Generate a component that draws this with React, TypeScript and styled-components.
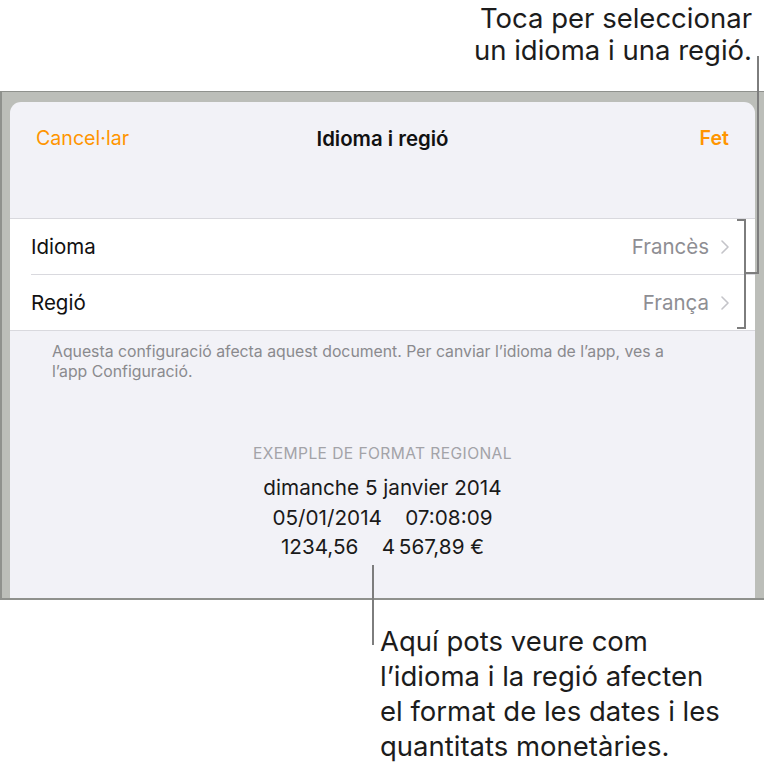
import React from 'react';
import styled, { createGlobalStyle } from 'styled-components';

const GlobalStyle = createGlobalStyle`
  html, body {
    margin: 0;
    padding: 0;
    background: #ffffff;
  }
  body {
    font-family: Inter, Roboto, "Liberation Sans", sans-serif;
    -webkit-font-smoothing: antialiased;
  }
`;

const Page = styled.div`
  position: relative;
  width: 764px;
  height: 772px;
  overflow: hidden;
  display: flex;
  flex-direction: column;
`;

const Callout = styled.div<{ $align: 'left' | 'right' }>`
  font-size: 27.5px;
  line-height: 32px;
  color: #1c1c1c;
  text-align: ${(p) => p.$align};
  padding: ${(p) => (p.$align === 'right' ? '2px 12px 0 0' : '0 0 0 380px')};
`;

const TopCallout = styled(Callout)`
  height: 91px;
  box-sizing: border-box;
`;

const BottomCallout = styled(Callout)`
  line-height: 35px;
  padding-top: 24px;
`;

const Frame = styled.div`
  background: #bcbeb9;
  border-top: 1px solid #8f918d;
  border-bottom: 2px solid #8f918d;
  border-left: 2px solid #8f918d;
  padding: 10px 9px 0 8px;
`;

const Sheet = styled.div`
  background: #f2f2f7;
  border-radius: 11px 11px 0 0;
  height: 496px;
  display: flex;
  flex-direction: column;
`;

const NavBar = styled.div`
  height: 72px;
  display: grid;
  grid-template-columns: 1fr auto 1fr;
  align-items: center;
  padding: 0 26px;
  font-size: 19.6px;
`;

const NavButton = styled.span<{ $bold?: boolean; $end?: boolean }>`
  color: #ff9500;
  font-weight: ${(p) => (p.$bold ? 600 : 400)};
  justify-self: ${(p) => (p.$end ? 'end' : 'start')};
`;

const NavTitle = styled.span`
  font-size: 20.4px;
  font-weight: 600;
  color: #111111;
`;

const Group = styled.div`
  margin-top: 44px;
  background: #ffffff;
  border-top: 1px solid #d9d9de;
  border-bottom: 1px solid #d9d9de;
`;

const Row = styled.div<{ $last?: boolean }>`
  height: 55px;
  margin-left: 21px;
  padding-right: 26px;
  display: flex;
  align-items: center;
  font-size: 20.5px;
  border-bottom: ${(p) => (p.$last ? 'none' : '1px solid #d9d9de')};
`;

const RowLabel = styled.span`
  flex: 1;
  color: #111111;
`;

const RowValue = styled.span`
  color: #8e8e93;
  margin-right: 12px;
`;

const Footnote = styled.p`
  margin: 11px 0 0 42px;
  width: 650px;
  font-size: 15.8px;
  line-height: 20px;
  color: #8a8a8e;
`;

const Example = styled.div`
  margin-top: 62px;
  display: flex;
  flex-direction: column;
  align-items: center;
`;

const ExampleTitle = styled.div`
  font-size: 15.6px;
  letter-spacing: 0.4px;
  color: #a3a3a8;
  margin-bottom: 10px;
`;

const ExampleLine = styled.div`
  font-size: 20.7px;
  line-height: 29.5px;
  color: #1a1a1a;
  white-space: pre;
`;

const Leader = styled.div`
  position: absolute;
  background: #7d7d7d;
`;

const Chevron = () => (
  <svg width="8" height="14" viewBox="0 0 8 14" fill="none">
    <path d="M1 1l6 6-6 6" stroke="#c4c4c9" strokeWidth="1.6" strokeLinecap="round" strokeLinejoin="round" />
  </svg>
);

const rows = [
  { label: 'Idioma', value: 'Francès' },
  { label: 'Regió', value: 'França' },
];

export default function App() {
  return (
    <Page>
      <GlobalStyle />
      <TopCallout $align="right">
        Toca per seleccionar
        <br />
        un idioma i una regió.
      </TopCallout>
      <Frame>
        <Sheet>
          <NavBar>
            <NavButton>Cancel·lar</NavButton>
            <NavTitle>Idioma i regió</NavTitle>
            <NavButton $bold $end>
              Fet
            </NavButton>
          </NavBar>
          <Group>
            {rows.map((r, i) => (
              <Row key={r.label} $last={i === rows.length - 1}>
                <RowLabel>{r.label}</RowLabel>
                <RowValue>{r.value}</RowValue>
                <Chevron />
              </Row>
            ))}
          </Group>
          <Footnote>
            Aquesta configuració afecta aquest document. Per canviar l’idioma de l’app, ves a l’app Configuració.
          </Footnote>
          <Example>
            <ExampleTitle>EXEMPLE DE FORMAT REGIONAL</ExampleTitle>
            <ExampleLine>dimanche 5 janvier 2014</ExampleLine>
            <ExampleLine>{'05/01/2014    07:08:09'}</ExampleLine>
            <ExampleLine>{'1234,56    4\u202f567,89 €'}</ExampleLine>
          </Example>
        </Sheet>
      </Frame>
      <BottomCallout $align="left">
        Aquí pots veure com
        <br />
        l’idioma i la regió afecten
        <br />
        el format de les dates i les
        <br />
        quantitats monetàries.
      </BottomCallout>

      {/* leader lines for the callouts */}
      <Leader style={{ left: 757, top: 56, width: 2, height: 218 }} />
      <Leader style={{ left: 745, top: 272, width: 14, height: 2 }} />
      <Leader style={{ left: 744, top: 219, width: 2, height: 110 }} />
      <Leader style={{ left: 737, top: 219, width: 9, height: 2 }} />
      <Leader style={{ left: 737, top: 327, width: 9, height: 2 }} />
      <Leader style={{ left: 372, top: 565, width: 2, height: 80 }} />
    </Page>
  );
}
